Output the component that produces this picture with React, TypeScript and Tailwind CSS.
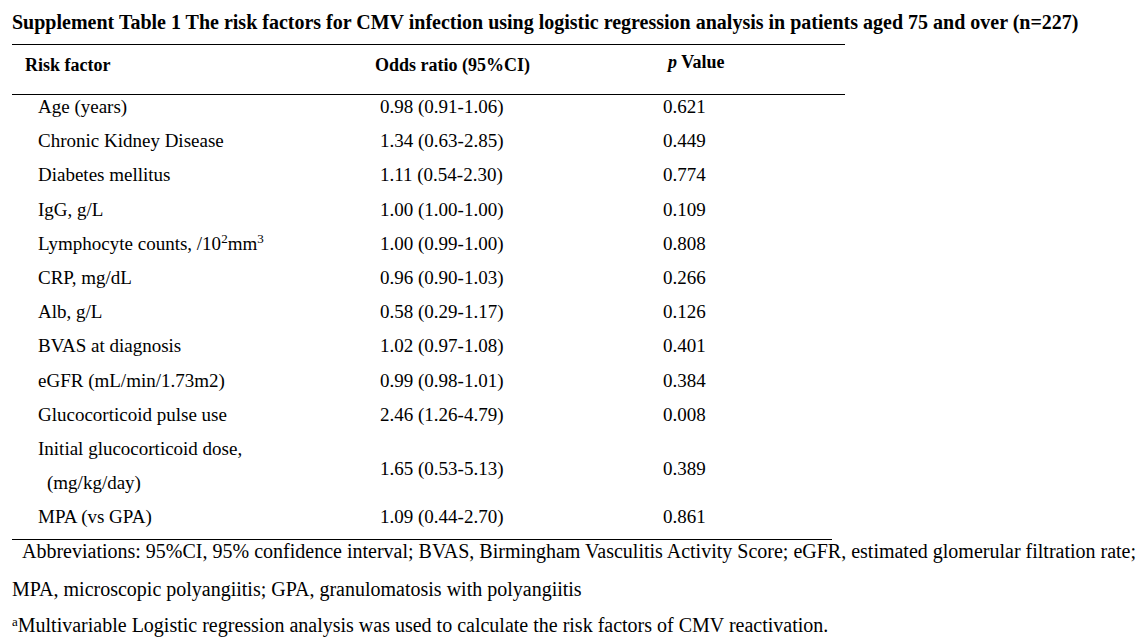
const rows: { label: React.ReactNode; odds: string; p: string; tall?: boolean }[] = [
  { label: "Age (years)", odds: "0.98 (0.91-1.06)", p: "0.621" },
  { label: "Chronic Kidney Disease", odds: "1.34 (0.63-2.85)", p: "0.449" },
  { label: "Diabetes mellitus", odds: "1.11 (0.54-2.30)", p: "0.774" },
  { label: "IgG, g/L", odds: "1.00 (1.00-1.00)", p: "0.109" },
  {
    label: (
      <>
        Lymphocyte counts, /10<sup className="text-[13px]">2</sup>mm<sup className="text-[13px]">3</sup>
      </>
    ),
    odds: "1.00 (0.99-1.00)",
    p: "0.808",
  },
  { label: "CRP, mg/dL", odds: "0.96 (0.90-1.03)", p: "0.266" },
  { label: "Alb, g/L", odds: "0.58 (0.29-1.17)", p: "0.126" },
  { label: "BVAS at diagnosis", odds: "1.02 (0.97-1.08)", p: "0.401" },
  { label: "eGFR (mL/min/1.73m2)", odds: "0.99 (0.98-1.01)", p: "0.384" },
  { label: "Glucocorticoid pulse use", odds: "2.46 (1.26-4.79)", p: "0.008" },
  {
    label: (
      <>
        <div className="h-[34px]">Initial glucocorticoid dose,</div>
        <div className="h-[34px] pl-[9px]">(mg/kg/day)</div>
      </>
    ),
    odds: "1.65 (0.53-5.13)",
    p: "0.389",
    tall: true,
  },
  { label: "MPA (vs GPA)", odds: "1.09 (0.44-2.70)", p: "0.861" },
];

export default function App() {
  return (
    <div className="h-[640px] w-[1142px] overflow-hidden bg-white px-[12px] pt-[9px] text-black font-['Liberation_Serif',serif]">
      <h1 className="text-[20px] font-bold leading-[26px]">
        Supplement Table 1 The risk factors for CMV infection using logistic regression analysis in patients aged 75 and over (n=227)
      </h1>

      <div className="mt-[9px] w-[833px] border-t border-black">
        <div className="grid h-[50px] grid-cols-[368px_283px_1fr] items-start border-b border-black text-[18px] font-bold leading-[26px]">
          <div className="pl-[13px] pt-[7px]">Risk factor</div>
          <div className="-ml-[5px] pt-[7px]">Odds ratio (95%CI)</div>
          <div className="pl-[5px] pt-[4px]">
            <span className="italic">p</span> Value
          </div>
        </div>
        {rows.map((r, i) => (
          <div
            key={i}
            className={`grid grid-cols-[368px_283px_1fr] text-[19px] leading-[24px] ${r.tall ? "h-[68px]" : "h-[34.2px]"}`}
          >
            <div className="pl-[26px]">{r.label}</div>
            <div className={r.tall ? "self-center -mt-[4px]" : ""}>{r.odds}</div>
            <div className={r.tall ? "self-center -mt-[4px]" : ""}>{r.p}</div>
          </div>
        ))}
        <div className="w-[820px] border-b border-black" />
      </div>

      <div className="whitespace-nowrap text-[20px] leading-[24px]">
        <p className="-mt-[1px] pl-[10px]">
          Abbreviations: 95%CI, 95% confidence interval; BVAS, Birmingham Vasculitis Activity Score; eGFR, estimated glomerular filtration rate;
        </p>
        <p className="mt-[14px]">MPA, microscopic polyangiitis; GPA, granulomatosis with polyangiitis</p>
        <p className="mt-[12px]">
          <sup className="text-[13px]">a</sup>Multivariable Logistic regression analysis was used to calculate the risk factors of CMV reactivation.
        </p>
      </div>
    </div>
  );
}
